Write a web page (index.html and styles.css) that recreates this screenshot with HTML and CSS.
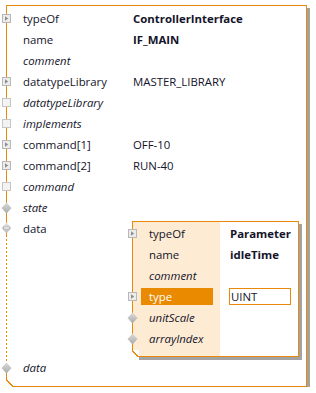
FILE: index.html
```html
<!DOCTYPE html>
<html lang="en">
<head>
    <meta charset="UTF-8">
    <title>ControllerInterface</title>
    <link rel="stylesheet" href="styles.css">
</head>
<body>

    <!-- shared gradients for the pin icons -->
    <svg class="defs" width="0" height="0">
        <defs>
            <linearGradient id="dia" x1="0" y1="0" x2="0" y2="1">
                <stop offset="0" stop-color="#dcdcdc"/>
                <stop offset="1" stop-color="#a9a9a9"/>
            </linearGradient>
            <linearGradient id="diaLight" x1="0" y1="0" x2="0" y2="1">
                <stop offset="0" stop-color="#e6e6e6"/>
                <stop offset="1" stop-color="#bcbcbc"/>
            </linearGradient>
        </defs>
    </svg>

    <div class="panel">

        <div class="row">
            <span class="pin"><svg width="11" height="11"><rect x="1.5" y="1.5" width="8" height="8" fill="#ececec" stroke="#b8b8b8"/><path d="M4 3.2 L7.2 5.5 L4 7.8Z" fill="#8e8e8e"/></svg></span>
            <span class="key">typeOf</span>
            <span class="val strong">ControllerInterface</span>
        </div>
        <div class="row">
            <span class="pin"></span>
            <span class="key">name</span>
            <span class="val strong">IF_MAIN</span>
        </div>
        <div class="row">
            <span class="pin"></span>
            <span class="key opt">comment</span>
        </div>
        <div class="row">
            <span class="pin"><svg width="11" height="11"><rect x="1.5" y="1.5" width="8" height="8" fill="#ececec" stroke="#b8b8b8"/><path d="M4 3.2 L7.2 5.5 L4 7.8Z" fill="#8e8e8e"/></svg></span>
            <span class="key">datatypeLibrary</span>
            <span class="val">MASTER_LIBRARY</span>
        </div>
        <div class="row">
            <span class="pin"><svg width="11" height="11"><rect x="1.5" y="1.5" width="8" height="8" fill="#f3f3f3" stroke="#c6c6c6"/></svg></span>
            <span class="key opt">datatypeLibrary</span>
        </div>
        <div class="row">
            <span class="pin"><svg width="11" height="11"><rect x="1.5" y="1.5" width="8" height="8" fill="#f3f3f3" stroke="#c6c6c6"/></svg></span>
            <span class="key opt">implements</span>
        </div>
        <div class="row">
            <span class="pin"><svg width="11" height="11"><rect x="1.5" y="1.5" width="8" height="8" fill="#ececec" stroke="#b8b8b8"/><path d="M4 3.2 L7.2 5.5 L4 7.8Z" fill="#8e8e8e"/></svg></span>
            <span class="key">command[1]</span>
            <span class="val">OFF-10</span>
        </div>
        <div class="row">
            <span class="pin"><svg width="11" height="11"><rect x="1.5" y="1.5" width="8" height="8" fill="#ececec" stroke="#b8b8b8"/><path d="M4 3.2 L7.2 5.5 L4 7.8Z" fill="#8e8e8e"/></svg></span>
            <span class="key">command[2]</span>
            <span class="val">RUN-40</span>
        </div>
        <div class="row">
            <span class="pin"><svg width="11" height="11"><rect x="1.5" y="1.5" width="8" height="8" fill="#f3f3f3" stroke="#c6c6c6"/></svg></span>
            <span class="key opt">command</span>
        </div>
        <div class="row">
            <span class="pin"><svg width="11" height="12"><path d="M5.5 0.5 L10.5 6 L5.5 11.5 L0.5 6Z" fill="url(#dia)"/></svg></span>
            <span class="key opt">state</span>
        </div>

        <!-- expanded data element -->
        <div class="row data-row">
            <span class="pin"><svg width="11" height="12"><path d="M5.5 0.5 L10.5 6 L5.5 11.5 L0.5 6Z" fill="url(#diaLight)"/><rect x="2.5" y="5" width="6" height="2" fill="#fafafa" stroke="#a0a0a0" stroke-width="0.6"/></svg></span>
            <span class="key">data</span>

            <div class="sub">
                <div class="sub-row">
                    <span class="pin"><svg width="11" height="11"><rect x="1.5" y="1.5" width="8" height="8" fill="#ececec" stroke="#b8b8b8"/><path d="M4 3.2 L7.2 5.5 L4 7.8Z" fill="#8e8e8e"/></svg></span>
                    <span class="sub-key">typeOf</span>
                    <span class="sub-val strong">Parameter</span>
                </div>
                <div class="sub-row">
                    <span class="pin"></span>
                    <span class="sub-key">name</span>
                    <span class="sub-val strong">idleTime</span>
                </div>
                <div class="sub-row">
                    <span class="pin"></span>
                    <span class="sub-key opt">comment</span>
                </div>
                <div class="sub-row">
                    <span class="pin"><svg width="11" height="11"><rect x="1.5" y="1.5" width="8" height="8" fill="#ececec" stroke="#b8b8b8"/><path d="M4 3.2 L7.2 5.5 L4 7.8Z" fill="#8e8e8e"/></svg></span>
                    <span class="sub-key selected">type</span>
                    <span class="sub-val edit">UINT</span>
                </div>
                <div class="sub-row">
                    <span class="pin"><svg width="11" height="12"><path d="M5.5 0.5 L10.5 6 L5.5 11.5 L0.5 6Z" fill="url(#dia)"/></svg></span>
                    <span class="sub-key opt">unitScale</span>
                </div>
                <div class="sub-row">
                    <span class="pin"><svg width="11" height="12"><path d="M5.5 0.5 L10.5 6 L5.5 11.5 L0.5 6Z" fill="url(#dia)"/></svg></span>
                    <span class="sub-key opt">arrayIndex</span>
                </div>
            </div>
        </div>

        <div class="row last-row">
            <span class="pin"><svg width="11" height="12"><path d="M5.5 0.5 L10.5 6 L5.5 11.5 L0.5 6Z" fill="url(#dia)"/></svg></span>
            <span class="key opt">data</span>
        </div>

    </div>

</body>
</html>
```

FILE: styles.css
```css
body {
    margin: 0;
    background-color: #fff;
    font-family: 'Open Sans', 'Noto Sans', sans-serif;
    font-size: 11.4px;
    color: #14142a;
}

.defs {
    position: absolute;
}

/* outer element box */
.panel {
    position: relative;
    box-sizing: border-box;
    width: 301px;
    height: 382px;
    margin: 5px 0 0 6px;
    padding-top: 2px;
    border: 1px solid #e8890c;
    border-left: none;
    box-shadow: 3px 3px 0 #a3a3a3;
    /* left rail: solid, dashed through the data block, solid again */
    background-image:
        linear-gradient(#e8890c, #e8890c),
        repeating-linear-gradient(to bottom, #e8890c 0 2px, transparent 2px 4px),
        linear-gradient(#e8890c, #e8890c);
    background-size: 1px 229px, 1px 133px, 1px 12px;
    background-position: 0 0, 0 229px, 0 362px;
    background-repeat: no-repeat;
}

/* cut bottom-left corner */
.panel::after {
    content: "";
    position: absolute;
    left: 0;
    bottom: -4px;
    width: 8px;
    height: 11px;
    background:
        linear-gradient(to top right, transparent calc(50% - 0.8px), #e8890c calc(50% - 0.8px), #e8890c calc(50% + 0.5px), #fff calc(50% + 0.5px)) 0 0 / 8px 8px no-repeat,
        #fff;
}

.row {
    display: flex;
    align-items: center;
    height: 21px;
}

.pin {
    display: flex;
    align-items: center;
    justify-content: center;
    flex: none;
    width: 11px;
    height: 12px;
    margin-left: -5px;
}

.key {
    flex: none;
    width: 110px;
    margin-left: 11px;
}

.opt {
    font-style: italic;
}

.strong {
    font-weight: bold;
}

.data-row {
    align-items: flex-start;
    height: 139px;
}

.data-row > .pin {
    margin-top: 4px;
}

.data-row > .key {
    line-height: 21px;
}

/* nested Parameter box */
.sub {
    position: relative;
    box-sizing: border-box;
    width: 167px;
    height: 136px;
    margin: 3px 0 0 -1px;
    padding-top: 1px;
    border: 1px solid #e8890c;
    box-shadow: 3px 3px 0 #a3a3a3;
    background: linear-gradient(to right, #fdebd3 0 87px, #fff 87px);
}

.sub::after {
    content: "";
    position: absolute;
    left: -1px;
    bottom: -4px;
    width: 7px;
    height: 10px;
    background:
        linear-gradient(to top right, transparent calc(50% - 0.8px), #e8890c calc(50% - 0.8px), #e8890c calc(50% + 0.5px), #fff calc(50% + 0.5px)) 0 0 / 7px 7px no-repeat,
        #fff;
}

.sub-row {
    display: flex;
    align-items: center;
    height: 21px;
}

.sub-row .pin {
    margin-left: -6px;
}

.sub-key {
    flex: none;
    box-sizing: border-box;
    width: 72px;
    height: 17px;
    line-height: 17px;
    margin: 0 7px 0 3px;
    padding-left: 8px;
}

.selected {
    background-color: #ea8a00;
    color: #fff;
}

.sub-val {
    margin-left: 9px;
    padding-left: 1px;
}

.edit {
    box-sizing: border-box;
    width: 62px;
    height: 17px;
    line-height: 15px;
    border: 1px solid #e8890c;
    background-color: #fff;
}
```
